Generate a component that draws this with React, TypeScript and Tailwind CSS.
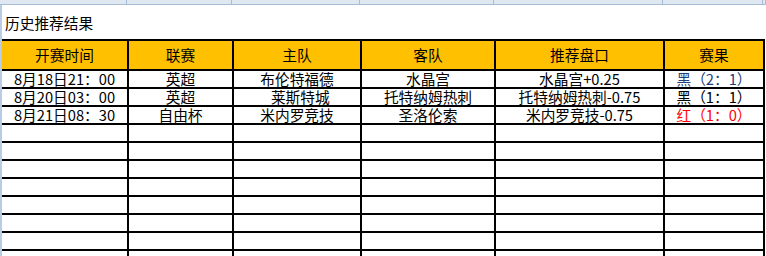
import React from 'react';

const headers = ['开赛时间', '联赛', '主队', '客队', '推荐盘口', '赛果'];

type Row = {
  time: string;
  league: string;
  home: string;
  away: string;
  pick: string;
  result: string;
  resultColor: string;
};

const rows: Row[] = [
  { time: '8月18日21：00', league: '英超', home: '布伦特福德', away: '水晶宫', pick: '水晶宫+0.25', result: '黑（2：1）', resultColor: 'text-[#1f3f7a]' },
  { time: '8月20日03：00', league: '英超', home: '\u00a0\u00a0莱斯特城', away: '托特纳姆热刺', pick: '托特纳姆热刺-0.75', result: '黑（1：1）', resultColor: 'text-black' },
  { time: '8月21日08：30', league: '自由杯', home: '米内罗竞技', away: '圣洛伦索', pick: '米内罗竞技-0.75', result: '红（1：0）', resultColor: 'text-[#ff0000]' },
];

const emptyRows = Array.from({ length: 9 });

const cell = 'bg-white h-[16px] flex items-center justify-center whitespace-nowrap leading-[16px]';

const App = () => {
  return (
    <div
      className="w-[766px] h-[256px] overflow-hidden bg-white text-black flex flex-col"
      style={{ fontFamily: '"Noto Sans CJK SC", "Noto Sans", sans-serif' }}
    >
      {/* column header strip, mostly scrolled away */}
      <div className="h-[5px] shrink-0 bg-[#dfe7f1] border-b border-[#a7bcd6] grid grid-cols-[127px_105px_128px_134px_169px_100px_1fr]">
        {Array.from({ length: 7 }).map((_, i) => (
          <div key={i} className="border-r border-[#a7bcd6]" />
        ))}
      </div>

      <div className="flex flex-1 min-h-0">
        <div className="w-[2px] shrink-0 bg-[#b9cce3]" />

        <div className="flex flex-col flex-1 min-w-0">
          <div className="h-[34px] shrink-0 flex items-center pl-[3px] pt-[2px] text-[14.7px]">
            历史推荐结果
          </div>

          <div className="w-[763px] bg-black pt-[2px] pr-[2px] grid grid-cols-[125px_103px_126px_132px_167px_98px] gap-[2px] text-[14.7px]">
            {headers.map((h) => (
              <div key={h} className="bg-[#ffc000] h-[28px] flex items-center justify-center leading-[20px]">
                {h}
              </div>
            ))}

            {rows.map((r) => (
              <React.Fragment key={r.time}>
                <div className={cell}>{r.time}</div>
                <div className={cell}>{r.league}</div>
                <div className={cell}>{r.home}</div>
                <div className={cell}>{r.away}</div>
                <div className={cell}>{r.pick}</div>
                <div className={`${cell} ${r.resultColor}`}>{r.result}</div>
              </React.Fragment>
            ))}

            {emptyRows.map((_, i) => (
              <React.Fragment key={i}>
                {headers.map((h) => (
                  <div key={h} className={cell} />
                ))}
              </React.Fragment>
            ))}
          </div>
        </div>
      </div>
    </div>
  );
};

export default App;
